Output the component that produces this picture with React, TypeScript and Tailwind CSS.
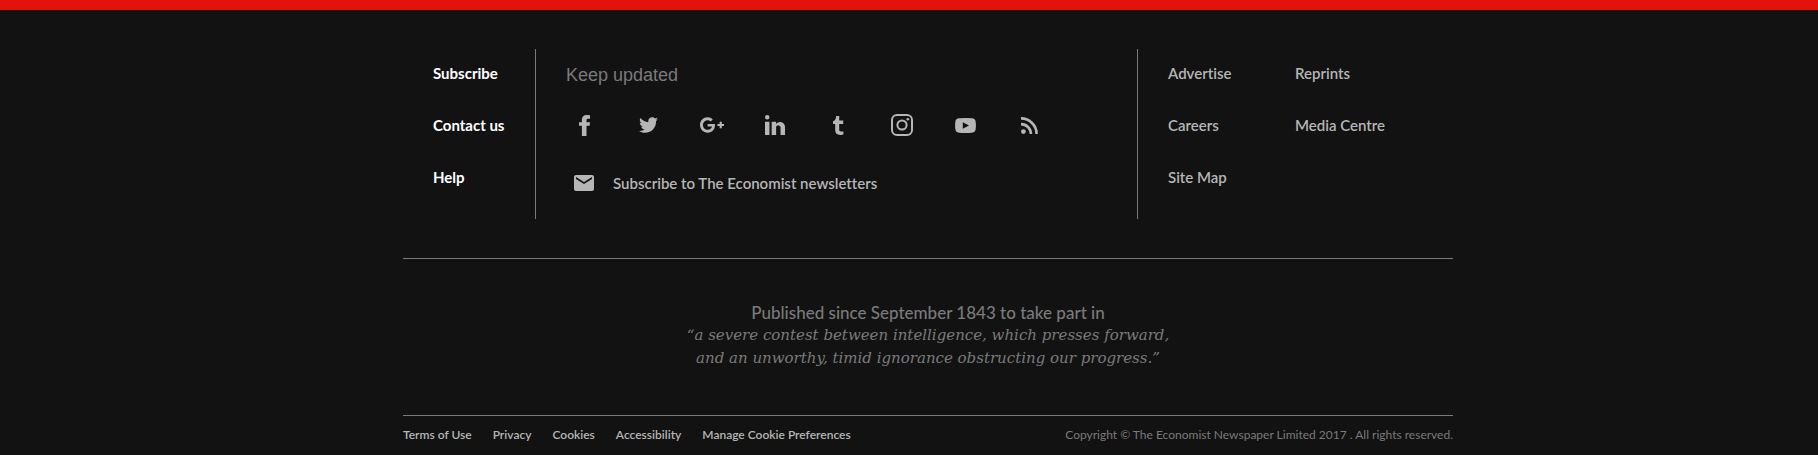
import type { ReactNode } from "react";

type Social = { label: string; icon: ReactNode };

const socials: Social[] = [
  {
    label: "Facebook",
    icon: (
      <svg viewBox="0 0 11 21" className="h-[21px] w-[11px]" fill="currentColor" aria-hidden="true">
        <path d="M11 .2V3.700H9C7.900 3.700 7.500 4.200 7.500 5.200V7.200H11L10.600 10.800H7.500V21H2.900V10.800H0V7.200H2.900V5C2.900 1.800 4.700 0 7.700 0Z" />
      </svg>
    ),
  },
  {
    label: "Twitter",
    icon: (
      <svg viewBox="1.5 4 21 17" className="h-[16px] w-[19px]" fill="currentColor" aria-hidden="true">
        <path d="M22.46,6C21.69,6.35 20.86,6.58 20,6.69C20.88,6.16 21.56,5.32 21.88,4.31C21.05,4.81 20.13,5.16 19.16,5.36C18.37,4.5 17.26,4 16,4C13.65,4 11.73,5.92 11.73,8.29C11.73,8.63 11.77,8.96 11.84,9.27C8.28,9.09 5.11,7.38 3,4.79C2.63,5.42 2.42,6.16 2.42,6.94C2.42,8.43 3.17,9.75 4.33,10.5C3.62,10.5 2.96,10.3 2.38,10V10.03C2.38,12.11 3.86,13.85 5.82,14.24C5.46,14.34 5.08,14.39 4.69,14.39C4.42,14.39 4.15,14.36 3.89,14.31C4.43,16 6,17.26 7.89,17.29C6.43,18.45 4.58,19.13 2.56,19.13C2.22,19.13 1.88,19.11 1.54,19.07C3.44,20.29 5.7,21 8.12,21C16,21 20.33,14.46 20.33,8.79C20.33,8.6 20.33,8.42 20.32,8.23C21.16,7.63 21.88,6.87 22.46,6Z" />
      </svg>
    ),
  },
  {
    label: "Google Plus",
    icon: (
      <svg viewBox="1 5 22 14" className="h-[16px] w-[24px]" fill="currentColor" aria-hidden="true">
        <path d="M23,11H21V9H19V11H17V13H19V15H21V13H23M8,11V13.4H12C11.8,14.4 10.8,16.4 8,16.4C5.6,16.4 3.7,14.4 3.7,12C3.7,9.6 5.6,7.6 8,7.6C9.4,7.6 10.3,8.2 10.8,8.7L12.7,6.9C11.5,5.7 9.9,5 8,5C4.1,5 1,8.1 1,12C1,15.9 4.1,19 8,19C12,19 14.7,16.2 14.7,12.2C14.7,11.7 14.7,11.4 14.6,11H8Z" />
      </svg>
    ),
  },
  {
    label: "LinkedIn",
    icon: (
      <svg viewBox="3 3 18 18" className="h-[20px] w-[20px]" fill="currentColor" aria-hidden="true">
        <path d="M21,21H17V14.25C17,13.19 15.81,12.31 14.75,12.31C13.69,12.31 13,13.19 13,14.25V21H9V9H13V11C13.66,9.93 15.36,9.24 16.5,9.24C19,9.24 21,11.28 21,13.75V21M7,21H3V9H7V21M5,3A2,2 0 0,1 7,5A2,2 0 0,1 5,7A2,2 0 0,1 3,5A2,2 0 0,1 5,3Z" />
      </svg>
    ),
  },
  {
    label: "Tumblr",
    icon: (
      <svg viewBox="0 0 11 19" className="h-[19px] w-[11px]" fill="currentColor" aria-hidden="true">
        <path d="M3.2 0H6.2V4.6H10.2V8H6.2V13.6C6.2 15 6.8 15.5 8 15.5H10.4V18.6C9.4 18.9 8.4 19 7.2 19C4 19 2.2 17.4 2.2 14.6V8H0V5.2C2.2 4.6 3 3 3.2 0Z" />
      </svg>
    ),
  },
  {
    label: "Instagram",
    icon: (
      <svg viewBox="0 0 22 22" className="h-[22px] w-[22px]" fill="none" stroke="currentColor" strokeWidth="2" aria-hidden="true">
        <rect x="1" y="1" width="20" height="20" rx="5" />
        <circle cx="11" cy="11" r="4.6" />
        <circle cx="16.8" cy="5.3" r="1.3" fill="currentColor" stroke="none" />
      </svg>
    ),
  },
  {
    label: "YouTube",
    icon: (
      <svg viewBox="0 0 21 15" className="h-[15px] w-[21px]" fill="currentColor" aria-hidden="true">
        <path fillRule="evenodd" d="M4 .3Q10.5-.3 17 .3Q20.2.5 20.6 3.4Q21.2 7.5 20.6 11.6Q20.2 14.5 17 14.7Q10.5 15.3 4 14.7Q.8 14.5.4 11.6Q-.2 7.5.4 3.4Q.8.5 4 .3ZM7.8 4.2V10.8L14 7.5Z" />
      </svg>
    ),
  },
  {
    label: "RSS",
    icon: (
      <svg viewBox="0 0 17 17" className="h-[17px] w-[17px]" fill="none" stroke="currentColor" strokeWidth="2.6" aria-hidden="true">
        <circle cx="2.4" cy="14.6" r="2.4" fill="currentColor" stroke="none" />
        <path d="M0 7.1A9.9 9.9 0 0 1 9.9 17M0 1.4A15.6 15.6 0 0 1 15.6 17" />
      </svg>
    ),
  },
];

const supportLinks = ["Subscribe", "Contact us", "Help"];
const companyLinks = ["Advertise", "Reprints", "Careers", "Media Centre", "Site Map"];
const legalLinks = ["Terms of Use", "Privacy", "Cookies", "Accessibility", "Manage Cookie Preferences"];

export default function App() {
  return (
    <footer className="min-h-screen border-t-[10px] border-[#e3120b] bg-[#121212] pt-[39px] pl-[38px] font-['Lato',sans-serif] text-[#b6b6b6] [font-variant-ligatures:none]">
      <div className="mx-auto max-w-[1050px]">
        <div className="flex min-h-[170px] text-[15px] leading-5">
          <nav aria-label="Support" className="w-[132px] shrink-0 pt-[14px] pl-[30px]">
            <ul className="flex flex-col gap-8 font-bold text-white">
              {supportLinks.map((text) => (
                <li key={text}>
                  <a href="#">{text}</a>
                </li>
              ))}
            </ul>
          </nav>

          <section className="flex-1 border-x border-[#7a7a7a] pt-[14px]">
            <h2 className="pl-[30px] font-['Liberation_Sans',sans-serif] text-lg leading-6 text-[#7a7a7a]">
              Keep updated
            </h2>
            <ul className="mt-[26px] ml-[17px] grid h-6 max-w-[508px] grid-cols-8">
              {socials.map(({ label, icon }) => (
                <li key={label} className="flex items-center justify-center">
                  <a href="#" aria-label={label}>
                    {icon}
                  </a>
                </li>
              ))}
            </ul>
            <a href="#" className="mt-9 ml-[38px] flex items-center gap-[19px] font-semibold">
              <svg viewBox="2 4 20 16" className="h-[16px] w-[20px]" fill="currentColor" aria-hidden="true">
                <path d="M20 4H4c-1.1 0-2 .9-2 2v12c0 1.1.9 2 2 2h16c1.1 0 2-.9 2-2V6c0-1.1-.9-2-2-2Zm0 4-8 5-8-5V6l8 5 8-5v2Z" />
              </svg>
              Subscribe to The Economist newsletters
            </a>
          </section>

          <nav aria-label="Company" className="w-[315px] shrink-0 pt-[14px] pl-[30px]">
            <ul className="grid grid-cols-[127px_1fr] gap-y-8 font-semibold">
              {companyLinks.map((text) => (
                <li key={text}>
                  <a href="#">{text}</a>
                </li>
              ))}
            </ul>
          </nav>
        </div>

        <div className="mt-[39px] border-y border-[#7a7a7a] pt-[42px] pb-[45px] text-center text-[17px] leading-[23px] text-[#7a7a7a]">
          <p className="font-medium">Published since September 1843 to take part in</p>
          <p className="font-['DejaVu_Serif',serif] text-[15px] leading-[23px] italic">
            “a severe contest between intelligence, which presses forward,
            <br />
            and an unworthy, timid ignorance obstructing our progress.”
          </p>
        </div>

        <div className="flex justify-between pt-[9px] pb-[11px] text-xs leading-5">
          <ul className="flex gap-[21px] font-semibold">
            {legalLinks.map((text) => (
              <li key={text}>
                <a href="#">{text}</a>
              </li>
            ))}
          </ul>
          <p className="text-[#7a7a7a]">
            Copyright © The Economist Newspaper Limited 2017 . All rights reserved.
          </p>
        </div>
      </div>
    </footer>
  );
}
